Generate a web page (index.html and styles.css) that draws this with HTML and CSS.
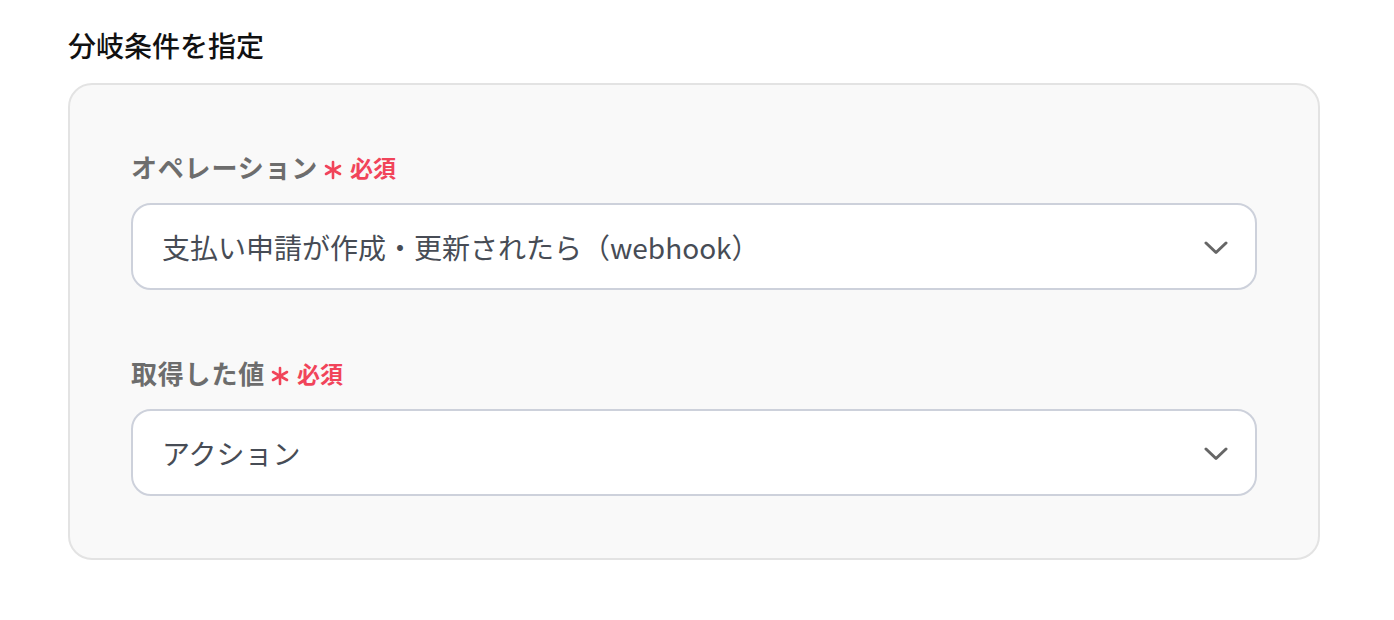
FILE: index.html
```html
<!DOCTYPE html>
<html lang="ja">
<head>
<meta charset="utf-8">
<link rel="stylesheet" href="styles.css">
</head>
<body>
<div class="page">
  <h2 class="title">分岐条件を指定</h2>
  <div class="panel">
    <div class="field">
      <div class="label">オペレーション<span class="req"><svg class="star" width="18" height="20" viewBox="0 0 18 20"><g stroke="#f1445a" stroke-width="2.6" stroke-linecap="round"><path d="M9 2 V18"/><path d="M2 6 L16 14"/><path d="M16 6 L2 14"/></g></svg>必須</span></div>
      <div class="select">
        <span class="value">支払い申請が作成・更新されたら（webhook）</span>
        <svg class="chev" width="24" height="14" viewBox="0 0 24 14"><path d="M2 2 L12 11.5 L22 2" fill="none" stroke="#666" stroke-width="3" stroke-linecap="round" stroke-linejoin="round"/></svg>
      </div>
    </div>
    <div class="field">
      <div class="label">取得した値<span class="req"><svg class="star" width="18" height="20" viewBox="0 0 18 20"><g stroke="#f1445a" stroke-width="2.6" stroke-linecap="round"><path d="M9 2 V18"/><path d="M2 6 L16 14"/><path d="M16 6 L2 14"/></g></svg>必須</span></div>
      <div class="select">
        <span class="value">アクション</span>
        <svg class="chev" width="24" height="14" viewBox="0 0 24 14"><path d="M2 2 L12 11.5 L22 2" fill="none" stroke="#666" stroke-width="3" stroke-linecap="round" stroke-linejoin="round"/></svg>
      </div>
    </div>
  </div>
</div>
</body>
</html>
```
FILE: styles.css
```css
* { box-sizing: border-box; }
body {
  margin: 0;
  background: #fff;
  font-family: "Noto Sans CJK JP", "Noto Sans", sans-serif;
}
.page {
  padding: 25px 74px 0 68px;
}
.title {
  margin: 0 0 18px 0;
  font-size: 28px;
  font-weight: 500;
  line-height: 40px;
  color: #111;
}
.panel {
  background: #f9f9f9;
  border: 2px solid #e3e3e3;
  border-radius: 24px;
  padding: 65px 61px 62px 61px;
  display: flex;
  flex-direction: column;
  gap: 66px;
}
.label {
  font-size: 26px;
  font-weight: 700;
  letter-spacing: 0.8px;
  color: #6d6d6d;
  line-height: 34px;
  margin-bottom: 19px;
  display: flex;
  align-items: center;
}
.req {
  color: #f1445a;
  font-size: 23px;
  letter-spacing: 0;
  margin-left: 6px;
  display: flex;
  align-items: center;
}
.star {
  display: block;
  margin-right: 8px;
  position: relative;
  top: 3px;
}
.select {
  height: 87px;
  background: #fff;
  border: 2px solid #cdd1db;
  border-radius: 20px;
  display: flex;
  align-items: center;
  justify-content: space-between;
  padding: 0 27px 0 29px;
}
.value {
  font-size: 28px;
  color: #474c55;
}
.chev { display: block; margin-top: 2px; }
```
